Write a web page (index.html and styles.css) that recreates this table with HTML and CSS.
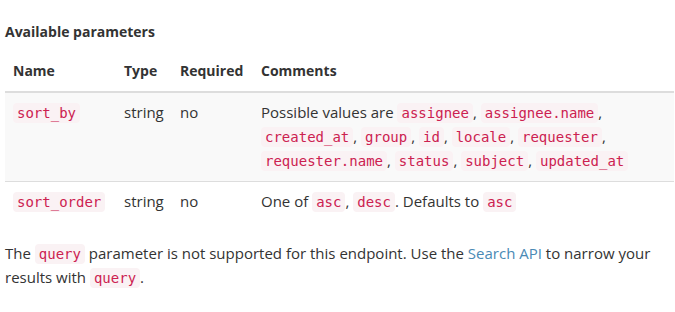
FILE: index.html
```html
<!DOCTYPE html>
<html lang="en">
<head>
    <meta charset="UTF-8">
    <title>Available parameters</title>
    <link rel="stylesheet" href="styles.css">
</head>
<body>

<div class="doc">
    <h4 class="doc-title">Available parameters</h4>

    <table class="params">
        <colgroup>
            <col class="col-name">
            <col class="col-type">
            <col class="col-required">
            <col>
        </colgroup>
        <thead>
            <tr>
                <th>Name</th>
                <th>Type</th>
                <th>Required</th>
                <th>Comments</th>
            </tr>
        </thead>
        <tbody>
            <tr class="odd">
                <td><code>sort_by</code></td>
                <td>string</td>
                <td>no</td>
                <td>Possible values are <code>assignee</code>, <code>assignee.name</code>, <code>created_at</code>, <code>group</code>, <code>id</code>, <code>locale</code>, <code>requester</code>, <code>requester.name</code>, <code>status</code>, <code>subject</code>, <code>updated_at</code></td>
            </tr>
            <tr>
                <td><code>sort_order</code></td>
                <td>string</td>
                <td>no</td>
                <td>One of <code>asc</code>, <code>desc</code>. Defaults to <code>asc</code></td>
            </tr>
        </tbody>
    </table>

    <p class="note">The <code>query</code> parameter is not supported for this endpoint. Use the <a href="#">Search API</a> to narrow your results with <code>query</code>.</p>
</div>

</body>
</html>
```

FILE: styles.css
```css
body {
    margin: 0;
    padding: 0;
    background: #fff;
    color: #333;
    font-family: "Open Sans", "Noto Sans", sans-serif;
    font-size: 15px;
    line-height: 24px;
}
.doc {
    padding: 22px 1px 0 5px;
}
.doc-title {
    margin: 0 0 9px 0;
    font-size: 14px;
    font-weight: 700;
    line-height: 20px;
}
.params {
    width: 100%;
    border-collapse: collapse;
    table-layout: fixed;
}
.col-name {
    width: 111px;
}
.col-type {
    width: 56px;
}
.col-required {
    width: 81px;
}
.params th {
    text-align: left;
    font-weight: 700;
    font-size: 14px;
    padding: 8px 8px;
    border-bottom: 2px solid #ddd;
}
.params td {
    vertical-align: top;
    padding: 7px 8px 9px 8px;
    border-top: 1px solid #ddd;
}
.params thead + tbody tr:first-child td {
    border-top: 0;
}
.params tr.odd td {
    background: #f9f9f9;
}
code {
    display: inline-block;
    font-family: "DejaVu Sans Mono", "Liberation Mono", monospace;
    font-size: 14px;
    line-height: 20px;
    color: #cc2150;
    background: #faf2f4;
    border-radius: 4px;
    padding: 0 4px;
}
.note {
    margin: 19px 0 0 0;
}
.note a {
    color: #4a8ab5;
    text-decoration: none;
}
```
